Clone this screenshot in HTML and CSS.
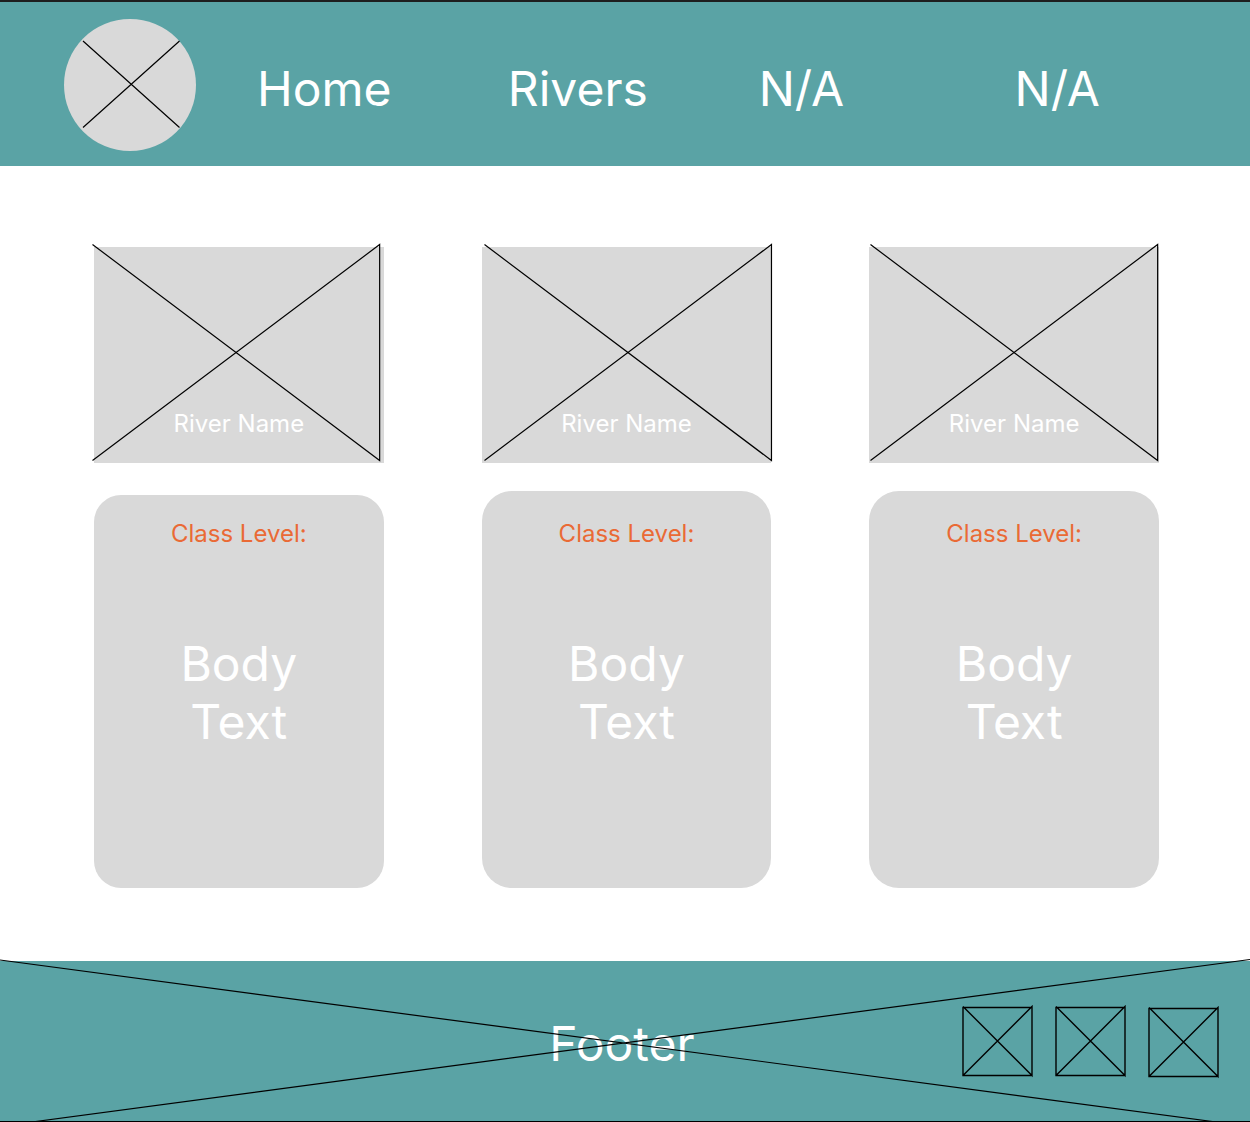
FILE: index.html
```html
<!DOCTYPE html>
<html lang="en">
<head>
<meta charset="utf-8">
<meta name="viewport" content="width=device-width, initial-scale=1">
<title>Rivers</title>
<link rel="stylesheet" href="styles.css">
</head>
<body>
<header class="site-header">
  <svg class="logo" viewBox="0 0 132 132" role="img" aria-label="Logo">
    <circle cx="66" cy="66" r="66" fill="#d9d9d9"/>
    <path class="line" d="M19 22 115.500 108.500M115.500 22 19 108.500"/>
  </svg>
  <nav class="site-nav" aria-label="Main">
    <a href="#home">Home</a>
    <a href="#rivers">Rivers</a>
    <a href="#na-1">N/A</a>
    <a href="#na-2">N/A</a>
  </nav>
</header>

<main class="rivers">
  <article class="river">
    <div class="picture">
      <svg class="cross" viewBox="0 0 290 216" preserveAspectRatio="none" aria-hidden="true"><path class="line" d="M-1.500-2.500 286 213.500V-2.500L-1.500 213.500"/></svg>
      <h2 class="river-name">River Name</h2>
    </div>
    <div class="panel panel-short">
      <p class="level">Class Level:</p>
      <p class="body-text">Body<br>Text</p>
    </div>
  </article>
  <article class="river">
    <div class="picture">
      <svg class="cross" viewBox="0 0 290 216" preserveAspectRatio="none" aria-hidden="true"><path class="line" d="M2.500-2.500 289.800 213.500V-2.500L2.500 213.500"/></svg>
      <h2 class="river-name">River Name</h2>
    </div>
    <div class="panel">
      <p class="level">Class Level:</p>
      <p class="body-text">Body<br>Text</p>
    </div>
  </article>
  <article class="river">
    <div class="picture">
      <svg class="cross" viewBox="0 0 290 216" preserveAspectRatio="none" aria-hidden="true"><path class="line" d="M1.500-2.500 289 213.500V-2.500L1.500 213.500"/></svg>
      <h2 class="river-name">River Name</h2>
    </div>
    <div class="panel">
      <p class="level">Class Level:</p>
      <p class="body-text">Body<br>Text</p>
    </div>
  </article>
</main>

<footer class="site-footer">
  <p class="footer-title">Footer</p>
  <div class="socials">
    <svg class="social" viewBox="0 0 70 70" aria-hidden="true"><path class="line" d="M1 1.500H70V69.500H1ZM1 .5 70 69.500V.5L1 69.500"/></svg>
    <svg class="social" viewBox="0 0 70 70" aria-hidden="true"><path class="line" d="M1 1.500H70V69.500H1ZM1 .5 70 69.500V.5L1 69.500"/></svg>
    <svg class="social" viewBox="0 0 70 70" aria-hidden="true"><path class="line" d="M1 2.500H70V70.500H1ZM1 1.500 70 70.500V1.500L1 70.500"/></svg>
  </div>
  <svg class="cross" viewBox="0 0 1250 161" preserveAspectRatio="none" aria-hidden="true"><path class="line" d="M0-1 1220 161.500M1250-1.500 28 161.500M0 160.500H1250"/></svg>
</footer>
</body>
</html>
```
FILE: styles.css
```css
* {
  box-sizing: border-box;
}

body {
  margin: 0;
  min-height: 100vh;
  display: flex;
  flex-direction: column;
  background: #fff;
  color: #fff;
  font-family: Inter, "Liberation Sans", sans-serif;
  font-size: 48px;
  line-height: 58px;
}

h2,
p {
  margin: 0;
  font-weight: 400;
}

.line {
  fill: none;
  stroke: #000;
  stroke-width: 1.2px;
  vector-effect: non-scaling-stroke;
}

.site-header {
  display: flex;
  align-items: center;
  gap: 61px;
  padding: 17px 150px 15px 64px;
  border-top: 2px solid #1e1e1e;
  background: #5aa3a5;
}

.logo {
  flex: none;
  width: 132px;
  height: 132px;
}

.site-nav {
  flex: 1;
  display: grid;
  grid-template-columns: 250fr 250fr 255fr auto;
  padding-top: 8px;
}

.site-nav a {
  color: inherit;
  text-decoration: none;
}

.rivers {
  flex: 1;
  display: grid;
  grid-template-columns: repeat(3, 1fr);
  gap: 98px;
  padding: 81px 91px 73px 94px;
}

.river {
  display: flex;
  flex-direction: column;
}

.picture {
  position: relative;
  display: flex;
  align-items: flex-end;
  justify-content: center;
  height: 216px;
  padding-bottom: 25px;
  background: #d9d9d9;
}

.cross {
  position: absolute;
  inset: 0;
  width: 100%;
  height: 100%;
  overflow: visible;
  pointer-events: none;
}

.river-name,
.level {
  font-size: 24px;
  line-height: 29px;
}

.river-name {
  position: relative;
}

.panel {
  flex: 1;
  display: flex;
  flex-direction: column;
  gap: 87px;
  margin-top: 28px;
  padding: 28px 24px 137px;
  border-radius: 30px;
  background: #d9d9d9;
  text-align: center;
}

.panel-short {
  margin-top: 32px;
  padding-top: 24px;
  border-radius: 27px;
}

.level {
  color: #ea6a35;
}

.site-footer {
  position: relative;
  display: grid;
  grid-template-columns: 1fr auto 1fr;
  align-items: center;
  height: 161px;
  padding: 0 32px 2px 26px;
  background: #5aa3a5;
}

.footer-title {
  grid-column: 2;
  padding-top: 6px;
}

.socials {
  display: flex;
  justify-content: flex-end;
  gap: 23px;
}

.social {
  width: 70px;
  height: 70px;
  overflow: visible;
}

.social .line {
  stroke-width: 1.4px;
}
```
